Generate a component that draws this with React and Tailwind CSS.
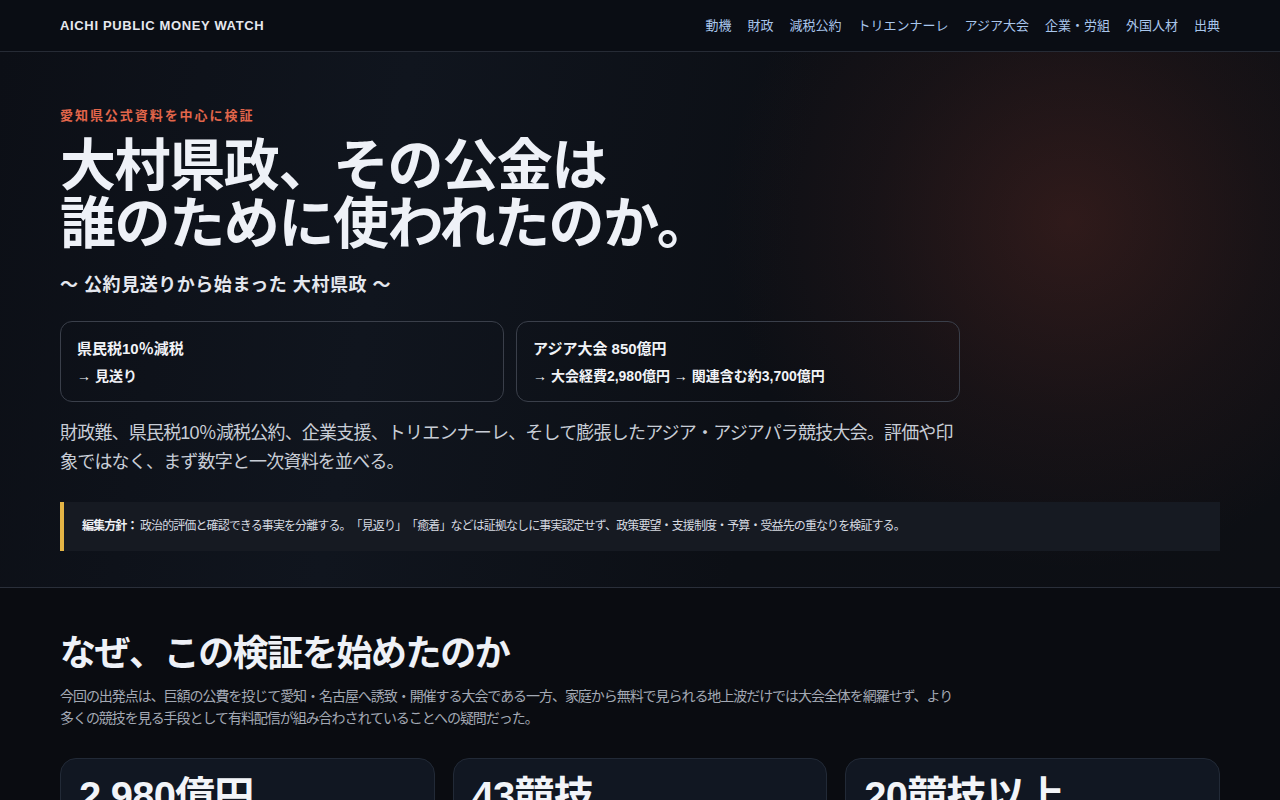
const nav = ['動機', '財政', '減税公約', 'トリエンナーレ', 'アジア大会', '企業・労組', '外国人材', '出典'];

const stats = [
  { value: '2,980億円' },
  { value: '43競技' },
  { value: '20競技以上' },
];

export default function App() {
  return (
    <div
      className="min-h-screen bg-[#0a0c11] text-gray-100 [text-spacing-trim:space-all]"
      style={{ fontFamily: '"Liberation Sans", "Noto Sans CJK JP", sans-serif' }}
    >
      <header className="border-b border-[#262b35] bg-[#0a0d14]">
        <div className="mx-auto flex h-[51px] max-w-[1160px] items-center justify-between">
          <div className="text-[13px] font-bold tracking-[0.05em] text-[#e6e8ee]">AICHI PUBLIC MONEY WATCH</div>
          <nav className="flex gap-4 text-[13px] text-[#a9c6ec]">
            {nav.map((n) => (
              <a key={n} href="#">{n}</a>
            ))}
          </nav>
        </div>
      </header>

      <section className="relative overflow-hidden border-b border-[#2a2f3a] bg-[linear-gradient(100deg,#0c0f16_0%,#10151e_30%,#0c0f15_60%,#0d0f14_100%)]">
        <div className="pointer-events-none absolute right-[-140px] top-[-180px] h-[700px] w-[700px] rounded-full bg-[radial-gradient(circle,rgba(115,48,38,0.34)_0%,rgba(85,38,32,0.16)_40%,rgba(0,0,0,0)_70%)]" />
        <div className="relative mx-auto max-w-[1160px] pb-9 pt-[55px]">
          <p className="text-[13px] font-bold leading-[18px] tracking-[0.15em] text-[#e2664b]">愛知県公式資料を中心に検証</p>
          <h1 className="mt-[12px] text-[56px] font-bold leading-[58px] tracking-[-0.025em] text-[#eef1f7]">
            大村県政、その公金は
            <br />
            誰のために使われたのか。
          </h1>
          <p className="mt-[20px] text-[18px] font-bold leading-[24px] tracking-[0.03em] text-[#e4e7ee]">～ 公約見送りから始まった 大村県政 ～</p>

          <div className="mt-[24px] grid max-w-[900px] grid-cols-2 gap-3">
            <div className="rounded-xl border border-[#3a3f4a] px-4 pb-[15px] pt-[17px]">
              <div className="text-[15px] font-bold leading-[20px] text-[#f1f3f7]">県民税10％減税</div>
              <div className="mt-[7px] text-[14px] font-bold leading-[20px] text-[#f1f3f7]">→ 見送り</div>
            </div>
            <div className="rounded-xl border border-[#3a3f4a] px-4 pb-[15px] pt-[17px]">
              <div className="text-[15px] font-bold leading-[20px] text-[#f1f3f7]">アジア大会 850億円</div>
              <div className="mt-[7px] text-[14px] font-bold leading-[20px] text-[#f1f3f7]">→ 大会経費2,980億円 → 関連含む約3,700億円</div>
            </div>
          </div>

          <p className="mt-[17px] max-w-[900px] text-[18px] leading-[29px] tracking-[-0.045em] text-[#c8cdd6]">
            財政難、県民税10％減税公約、企業支援、トリエンナーレ、そして膨張したアジア・アジアパラ競技大会。評価や印象ではなく、まず数字と一次資料を並べる。
          </p>

          <div className="mt-[25px] border-l-4 border-[#e3b445] bg-[#161a22] px-[18px] py-[16px] text-[12px] leading-[17px] tracking-[-0.075em] text-[#d5d9e0]">
            <strong className="font-bold text-[#eef0f4]">編集方針：</strong>{' '}
            政治的評価と確認できる事実を分離する。「見返り」「癒着」などは証拠なしに事実認定せず、政策要望・支援制度・予算・受益先の重なりを検証する。
          </div>
        </div>
      </section>

      <section className="mx-auto max-w-[1160px] pt-[44px]">
        <h2 className="text-[36px] font-bold leading-[44px] tracking-[-0.04em] text-[#eef1f7]">なぜ、この検証を始めたのか</h2>
        <p className="mt-[9px] max-w-[900px] text-[14px] leading-[22px] tracking-[-0.075em] text-[#a3a9b4]">
          今回の出発点は、巨額の公費を投じて愛知・名古屋へ誘致・開催する大会である一方、家庭から無料で見られる地上波だけでは大会全体を網羅せず、より多くの競技を見る手段として有料配信が組み合わされていることへの疑問だった。
        </p>
        <div className="mt-[29px] grid grid-cols-3 gap-[18px] pb-10">
          {stats.map((s) => (
            <div key={s.value} className="rounded-2xl border border-[#222a37] bg-[#111722] px-[18px] pb-6 pt-[12px]">
              <div className="text-[40px] font-bold leading-[50px] tracking-[-0.02em] text-[#f2f4f8]">{s.value}</div>
            </div>
          ))}
        </div>
      </section>
    </div>
  );
}
